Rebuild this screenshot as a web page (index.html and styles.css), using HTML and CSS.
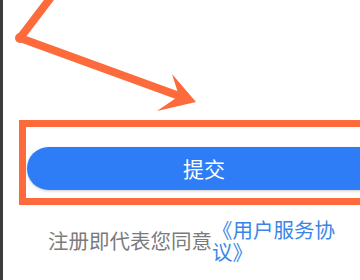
FILE: index.html
```html
<!DOCTYPE html>
<html lang="zh-CN">
<head>
  <meta charset="UTF-8" />
  <meta name="viewport" content="width=device-width, initial-scale=1" />
  <title>提交</title>
  <link rel="stylesheet" href="styles.css">
</head>
<body>
  <div class="screen">
    <div class="edge"></div>
    <main class="page">
      <button class="submit-btn">提交</button>
      <div class="agree-row">
        <span class="agree-text">注册即代表您同意</span>
        <a href="#" class="agree-link">《用户服务协议》</a>
      </div>
    </main>
    <!-- annotation overlay -->
    <svg class="mark-arrow" width="360" height="280" viewBox="0 0 360 280">
      <polyline points="52,-4 20,38 182,97" fill="none" stroke="#fd6a3b" stroke-width="8" stroke-linecap="round" stroke-linejoin="round" />
      <circle cx="20" cy="38" r="5" fill="#fd6a3b" />
      <path d="M196,102 L172,74 L179,96 L157,111 Z" fill="#fd6a3b" />
    </svg>
    <div class="mark-box"></div>
  </div>
</body>
</html>
```

FILE: styles.css
```css
* { margin: 0; padding: 0; box-sizing: border-box; }
body {
  font-family: "Noto Sans CJK SC", "Noto Sans", sans-serif;
  background: #ffffff;
}
.screen {
  display: flex; width: 360px; height: 280px;
  overflow: hidden; position: relative;
}
.edge { flex: none; width: 3px; background: #3b3b3b; }
.page { flex: none; width: 381px; padding-top: 147px; background: #ffffff; }
.submit-btn {
  display: block; margin-left: 24px; width: 354px; height: 43px;
  border: none; border-radius: 22px; background: #2f7df6; color: #ffffff;
  font-family: inherit; font-size: 21px; line-height: 43px;
  box-shadow: 0 1px 3px rgba(0, 0, 0, 0.2);
}
.agree-row {
  display: flex; align-items: center;
  margin: 28px 0 0 45px;
  font-size: 20.5px; line-height: 22px;
}
.agree-text { color: #7b7b7b; }
.agree-link { width: 132px; color: #3a86e6; text-decoration: none; }
.mark-arrow { position: absolute; left: 0; top: 0; pointer-events: none; }
.mark-box {
  position: absolute; left: 19px; top: 120px; width: 400px; height: 85px;
  border: 7px solid #fd6a3b; pointer-events: none;
}
```
